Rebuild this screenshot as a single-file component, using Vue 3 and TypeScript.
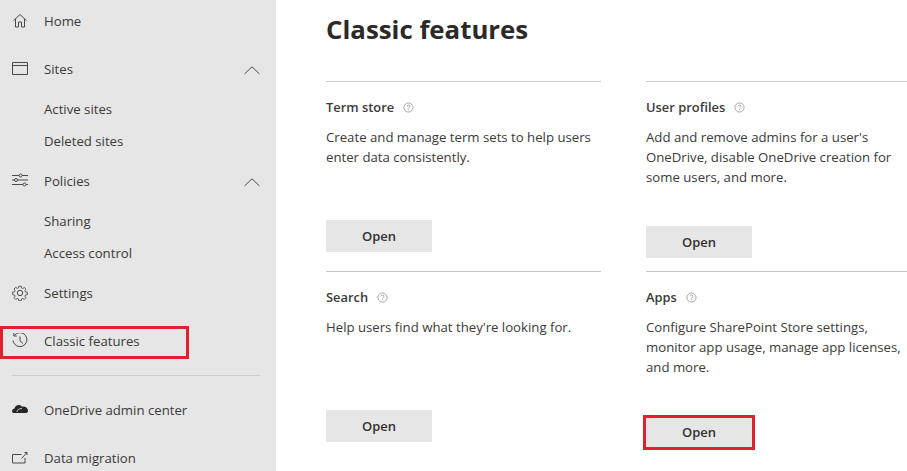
<script setup lang="ts">
interface Feature { title: string; lines: string[]; long?: boolean; marked?: boolean }
const features: Feature[] = [
  { title: 'Term store', lines: ['Create and manage term sets to help users', 'enter data consistently.'] },
  { title: 'User profiles', lines: ["Add and remove admins for a user's", 'OneDrive, disable OneDrive creation for', 'some users, and more.'], long: true },
  { title: 'Search', lines: ["Help users find what they're looking for."] },
  { title: 'Apps', lines: ['Configure SharePoint Store settings,', 'monitor app usage, manage app licenses,', 'and more.'], long: true, marked: true },
]
</script>

<template>
  <div class="page">
    <aside class="nav">
      <div class="item gap-after">
        <svg class="icon" viewBox="0 0 16 16"><path d="M1.500 7.700 8 1.500l6.500 6.200M3.500 6V14H6.500V9H9.500V14H12.500V6" /></svg>
        <span>Home</span>
      </div>
      <div class="item small-after">
        <svg class="icon" viewBox="0 0 16 16"><path d="M.5 1.500h15v12H.5zM.5 4.500h15" /></svg>
        <span>Sites</span>
        <svg class="chev" viewBox="0 0 16 9"><path d="M.5 8 8 .8 15.500 8" /></svg>
      </div>
      <div class="item sub">Active sites</div>
      <div class="item sub small-after">Deleted sites</div>
      <div class="item small-after">
        <svg class="icon" viewBox="0 0 16 16"><path d="M0 2.500h7M10 2.500h6M0 7h2.500M5.500 7h10.500M0 11.500h11M14 11.500h2" /><circle cx="8.500" cy="2.500" r="1.500" /><circle cx="4" cy="7" r="1.500" /><circle cx="12.500" cy="11.500" r="1.500" /></svg>
        <span>Policies</span>
        <svg class="chev" viewBox="0 0 16 9"><path d="M.5 8 8 .8 15.500 8" /></svg>
      </div>
      <div class="item sub">Sharing</div>
      <div class="item sub small-after">Access control</div>
      <div class="item gap-after">
        <svg class="icon" viewBox="0 0 16 16"><path d="M6.700 1h2.600l.4 2 1.300.6 1.800-1.100 1.800 1.800-1.100 1.800.6 1.300 2 .4v2.600l-2 .4-.6 1.300 1.100 1.800-1.800 1.800-1.800-1.100-1.300.6-.4 2H6.700l-.4-2-1.300-.6-1.800 1.100-1.800-1.800 1.100-1.800-.6-1.300-2-.4V7.600l2-.4.6-1.300L1.400 4.100l1.800-1.800L5 3.400l1.300-.6z" transform="translate(.8 .3) scale(.9)" /><circle cx="8" cy="8" r="2.700" /></svg>
        <span>Settings</span>
      </div>
      <div class="item marked-row">
        <svg class="icon" viewBox="0 0 16 16"><path d="M2.300 2.500A7 7 0 1 1 1 7.500M1.800 0v3h3M8 3.500V7.800l3 2.700" /></svg>
        <span>Classic features</span>
        <span class="marker nav-marker"></span>
      </div>
      <div class="divider"></div>
      <div class="item gap-after">
        <svg class="icon" viewBox="0 0 16 16"><path class="solid" d="M0 9.500c0-1.500 1-2.500 2.300-2.700C3 4.500 4.600 3 6.700 3c1.400 0 2.600.6 3.400 1.700 2.900-.7 5.400 1 5.900 3.800.1.800-.3 2.500-1.800 2.500H2c-1.200 0-2-.7-2-1.500z" /><path class="arc" d="M5 10c0-2 1.800-3.800 5-3.300" /></svg>
        <span>OneDrive admin center</span>
      </div>
      <div class="item">
        <svg class="icon" viewBox="0 0 16 16"><path d="M9.500 4.500H.5v8.500h12.500V8M9.500 8.500 15 2.500M12.500 2.500H15V5" /></svg>
        <span>Data migration</span>
      </div>
    </aside>

    <main class="main">
      <h1 class="title">Classic features</h1>
      <div class="grid">
        <section v-for="f in features" :key="f.title" class="card">
          <h2 class="card-title">
            {{ f.title }}
            <svg class="help" viewBox="0 0 12 12"><circle cx="6" cy="6" r="5" /><path d="M4.500 4.800C4.500 3.900 5.200 3.400 6 3.400s1.500.5 1.500 1.300c0 1.100-1.500 1.100-1.500 2.300M6 8v1" /></svg>
          </h2>
          <p class="desc" :class="{ long: f.long }">
            <span v-for="line in f.lines" :key="line" class="line">{{ line }}</span>
          </p>
          <div class="btn">
            Open
            <span v-if="f.marked" class="marker btn-marker"></span>
          </div>
        </section>
      </div>
    </main>
  </div>
</template>

<style>
html, body { margin: 0; background: #fff; }
</style>

<style scoped>
.page {
  display: flex;
  width: 907px;
  height: 471px;
  overflow: hidden;
  font-family: "Open Sans", "Noto Sans", sans-serif;
  font-size: 13.2px;
  color: #3b3a39;
}
.nav {
  width: 276px;
  flex: none;
  height: 471px;
  padding-top: 5px;
  box-sizing: border-box;
  background: #e6e6e6;
  overflow: hidden;
}
.item {
  position: relative;
  display: flex;
  align-items: center;
  height: 32px;
  padding-left: 12px;
  white-space: nowrap;
}
.item.sub { padding-left: 44px; }
.gap-after { margin-bottom: 16px; }
.small-after { margin-bottom: 8px; }
.icon {
  width: 16px;
  height: 16px;
  margin-right: 16px;
  flex: none;
  fill: none;
  stroke: #4a4948;
  stroke-width: 1;
}
.icon .solid { fill: #262626; stroke: none; }
.icon .arc { stroke: #e6e6e6; stroke-width: .8; }
.chev {
  position: absolute;
  left: 244px;
  top: 13px;
  width: 16px;
  height: 9px;
  fill: none;
  stroke: #4a4948;
  stroke-width: 1;
}
.marker {
  position: absolute;
  box-sizing: border-box;
  border: 3px solid #e0202f;
  pointer-events: none;
}
.nav-marker { left: 0; top: 1px; width: 189px; height: 33px; }
.divider {
  height: 1px;
  margin: 18px 16px 18px 12px;
  background: #cdcdcd;
}
.main {
  flex: 1;
  min-width: 0;
  padding-left: 50px;
}
.title {
  margin: 0;
  height: 81px;
  font-size: 25.8px;
  line-height: 58px;
  font-weight: 700;
  color: #2b2a29;
}
.grid {
  display: grid;
  grid-template-columns: 275px 261px;
  grid-auto-rows: 190px;
  column-gap: 45px;
}
.card { border-top: 1px solid #c8c6c4; }
.card-title {
  display: flex;
  align-items: center;
  margin: 0;
  height: 50px;
  font-size: 12.9px;
  font-weight: 600;
  color: #3b3a39;
}
.help {
  width: 11px;
  height: 11px;
  margin-left: 9px;
  fill: none;
  stroke: #8a8886;
  stroke-width: .8;
}
.desc {
  margin: -5px 0 0;
  height: 93px;
  line-height: 20px;
}
.desc.long { height: 99px; }
.line { display: block; white-space: nowrap; }
.btn {
  position: relative;
  width: 106px;
  height: 32px;
  line-height: 32px;
  text-align: center;
  background: #e6e6e6;
  font-size: 13px;
  font-weight: 600;
  color: #323130;
}
.btn-marker { left: -3px; top: -1px; width: 112px; height: 35px; }
</style>
